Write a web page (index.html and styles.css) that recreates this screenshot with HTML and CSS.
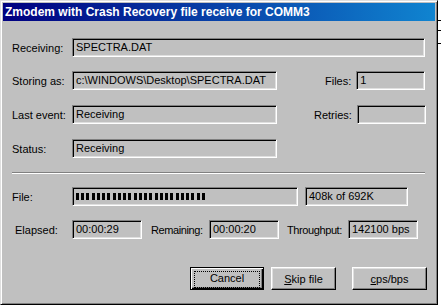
FILE: index.html
```html
<!DOCTYPE html>
<html lang="en">
<head>
    <meta name="viewport" content="width=device-width, initial-scale=1">
    <title>Zmodem</title>
    <link rel="stylesheet" href="styles.css">
</head>
<body>
    <div class="backdrop">
        <span class="line l1"></span>
        <span class="line l2"></span>
        <span class="line l3"></span>
    </div>
    <div class="window">
        <div class="titlebar">Zmodem with Crash Recovery file receive for COMM3</div>

        <div class="content">
            <div class="row r1">
                <span class="label">Receiving:</span>
                <div class="field w-full">SPECTRA.DAT</div>
            </div>

            <div class="row r2">
                <span class="label">Storing as:</span>
                <div class="field w-path">c:\WINDOWS\Desktop\SPECTRA.DAT</div>
                <span class="label side files">Files:</span>
                <div class="field w-small">1</div>
            </div>

            <div class="row r3">
                <span class="label">Last event:</span>
                <div class="field w-path">Receiving</div>
                <span class="label side retries">Retries:</span>
                <div class="field w-small"></div>
            </div>

            <div class="row r4">
                <span class="label">Status:</span>
                <div class="field w-path">Receiving</div>
            </div>

            <div class="separator"></div>

            <div class="row r5">
                <span class="label">File:</span>
                <div class="field progress"><div class="blocks"></div></div>
                <div class="field count">408k of 692K</div>
            </div>

            <div class="row r6">
                <span class="label elapsed">Elapsed:</span>
                <div class="field time">00:00:29</div>
                <span class="label remaining">Remaining:</span>
                <div class="field time">00:00:20</div>
                <span class="label throughput">Throughput:</span>
                <div class="field time rate">142100 bps</div>
            </div>

            <div class="buttons">
                <button class="btn default"><span class="focus">Cancel</span></button>
                <button class="btn skip"><u>S</u>kip file</button>
                <button class="btn cps"><u>c</u>ps/bps</button>
            </div>
        </div>
    </div>
</body>
</html>
```

FILE: styles.css
```css
body {
    margin: 0;
    width: 441px;
    height: 307px;
    background: #ffffff;
    font-family: "Liberation Sans", Arial, sans-serif;
    font-size: 11px;
    color: #000;
    position: relative;
    overflow: hidden;
}

/* whatever sits behind the dialog on the right */
.backdrop .line {
    position: absolute;
    left: 438px;
    width: 3px;
    height: 1px;
    background: #000;
}
.backdrop .l1 { top: 20px; }
.backdrop .l2 { top: 30px; }
.backdrop .l3 { top: 43px; }

.window {
    width: 438px;
    height: 305px;
    box-sizing: border-box;
    background: #c0c0c0;
    border-top: 1px solid #dfdfdf;
    border-left: 1px solid #dfdfdf;
    border-right: 1px solid #000;
    border-bottom: 1px solid #000;
    box-shadow: inset 1px 1px 0 #fff, inset -1px -1px 0 #808080;
    padding: 2px;
}

.titlebar {
    height: 18px;
    line-height: 18px;
    padding-left: 2px;
    background: linear-gradient(to right, #000080, #1084d0);
    color: #fff;
    font-weight: bold;
    font-size: 12px;
    white-space: nowrap;
}

.content {
    padding-left: 9px;
}

.row {
    display: flex;
    align-items: center;
    height: 19px;
}
.r1 { margin-top: 17px; }
.r2 { margin-top: 14px; }
.r3 { margin-top: 15px; }
.r4 { margin-top: 15px; }
.r5 { margin-top: 0; }
.r6 { margin-top: 14px; }

.label {
    width: 60px;
    flex: none;
    white-space: nowrap;
}
.label.side {
    width: auto;
}
.files { margin-left: 48px; margin-right: 5px; }
.retries { margin-left: 37px; margin-right: 5px; }

.field {
    box-sizing: border-box;
    height: 19px;
    line-height: 17px;
    padding-left: 3px;
    flex: none;
    white-space: nowrap;
    overflow: hidden;
    border-top: 1px solid #808080;
    border-left: 1px solid #808080;
    border-right: 1px solid #fff;
    border-bottom: 1px solid #fff;
    box-shadow: inset 1px 1px 0 #000, inset -1px -1px 0 #dfdfdf;
}
.w-full { width: 353px; }
.w-path { width: 205px; }
.w-small { width: 69px; }

.separator {
    width: 413px;
    height: 1px;
    margin: 14px 0 13px;
    background: #808080;
    border-bottom: 1px solid #fff;
}

.progress {
    width: 226px;
    padding: 0 0 0 3px;
    display: flex;
    align-items: center;
}
.blocks {
    width: 131px;
    height: 7px;
    background: repeating-linear-gradient(to right, #000 0, #000 3px, transparent 3px, transparent 5.25px);
}
.count {
    width: 103px;
    margin-left: 7px;
}

.elapsed { width: 57px; padding-left: 3px; }
.time { width: 70px; }
.remaining { width: 58px; margin-left: 9px; letter-spacing: -0.4px; }
.throughput { width: 61px; margin-left: 8px; letter-spacing: -0.4px; }

.buttons {
    display: flex;
    margin-top: 28px;
    padding-left: 178px;
}
.btn {
    box-sizing: border-box;
    height: 23px;
    padding: 0;
    font-family: "Liberation Sans", Arial, sans-serif;
    font-size: 11px;
    color: #000;
    background: #c0c0c0;
    border-top: 1px solid #fff;
    border-left: 1px solid #fff;
    border-right: 1px solid #000;
    border-bottom: 1px solid #000;
    box-shadow: inset -1px -1px 0 #808080, inset 1px 1px 0 #dfdfdf;
}
.btn.default {
    width: 74px;
    border: 1px solid #000;
    box-shadow: inset 1px 1px 0 #fff, inset -1px -1px 0 #000, inset -2px -2px 0 #808080;
    padding: 3px;
}
.focus {
    display: block;
    height: 15px;
    line-height: 13px;
    border: 1px dotted #000;
}
.skip { width: 65px; margin-left: 7px; }
.cps { width: 75px; margin-left: 16px; }
```
